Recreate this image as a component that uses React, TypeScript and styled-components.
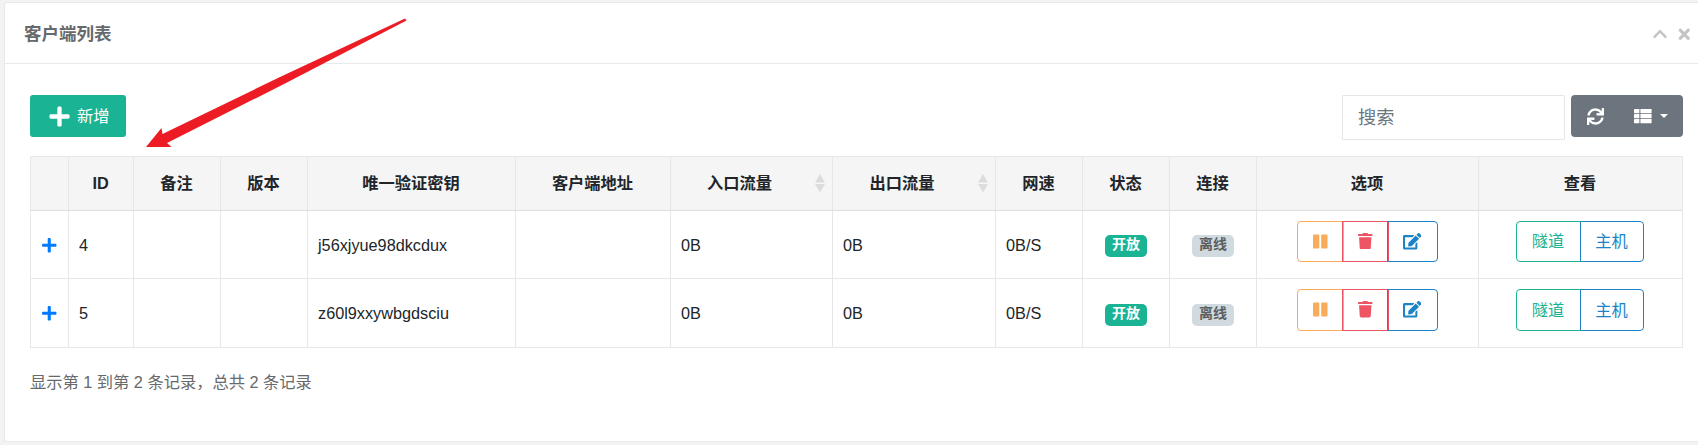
import React from "react";
import styled, { createGlobalStyle } from "styled-components";
import { FaPlus, FaSync, FaTrash, FaEdit, FaChevronUp, FaTimes } from "react-icons/fa";

const Global = createGlobalStyle`
  * { box-sizing: border-box; }
  html, body { margin: 0; background: #f3f3f4; overflow: hidden; }
  body {
    font-family: "Liberation Sans", "Noto Sans CJK SC", sans-serif;
    font-size: 16.25px;
    color: #676a6c;
  }
  button, input { font-family: inherit; }
`;

const Page = styled.div`
  position: relative;
  height: 445px;
  padding: 2px 0 3px 4px;
  overflow: hidden;
`;
const Card = styled.section`
  height: 440px;
  background: #fff;
  border: 1px solid #e7eaec;
  border-right: 0;
  border-radius: 3px 0 0 3px;
`;
const CardHeader = styled.header`
  display: flex;
  align-items: center;
  justify-content: space-between;
  height: 61px;
  padding: 2px 6px 0 19px;
  border-bottom: 1px solid #e7eaec;
`;
const Title = styled.h5`
  margin: 0;
  font-size: 17.5px;
  line-height: 22px;
  font-weight: 700;
`;
const Tools = styled.div`
  display: flex;
  align-items: center;
  gap: 8px;
  color: #c4c4c4;
  svg { display: block; }
`;
const CardBody = styled.div`
  padding: 31px 15px 0 25px;
`;
const Toolbar = styled.div`
  display: flex;
  align-items: flex-start;
  height: 61px;
`;
const AddButton = styled.button`
  display: flex;
  align-items: center;
  gap: 6px;
  width: 96px;
  height: 42px;
  padding: 0 0 0 18px;
  border: 0;
  border-radius: 3px;
  background: #1ab394;
  color: #fff;
  font-size: 16.25px;
  line-height: 24px;
`;
const Search = styled.input`
  width: 223px;
  height: 45px;
  margin: 0 6px 0 auto;
  padding: 2px 15px 0;
  border: 1px solid #e5e6e7;
  border-radius: 1px;
  font-size: 18.2px;
  &::placeholder { color: #6c757d; opacity: 1; }
`;
const ToolGroup = styled.div`
  display: flex;
  width: 112px;
  height: 42px;
  border-radius: 4px;
  background: #6c757d;
  overflow: hidden;
`;
const ToolButton = styled.button<{ $width: number }>`
  display: flex;
  align-items: center;
  justify-content: center;
  gap: 8px;
  width: ${(p) => p.$width}px;
  padding: 0;
  border: 0;
  background: transparent;
  color: #fff;
`;
const Caret = styled.span`
  border: 4px solid transparent;
  border-top-color: #fff;
  border-bottom: 0;
`;
const Table = styled.table`
  table-layout: fixed;
  width: 1653px;
  border-collapse: separate;
  border-spacing: 0;
  border-top: 1px solid #e7e7e7;
  border-right: 1px solid #e7e7e7;
  color: #212529;
  line-height: 24px;
`;
const Th = styled.th<{ $sort?: boolean }>`
  position: relative;
  height: 54px;
  padding: 0 ${(p) => (p.$sort ? 24 : 1)}px 2px 0;
  border-left: 1px solid #e7e7e7;
  border-bottom: 1px solid #ddd;
  background: #f5f5f6;
  text-align: center;
  font-weight: 700;
`;
const SortArrows = styled.svg`
  position: absolute;
  right: 7px;
  top: 17px;
`;
const Td = styled.td<{ $center?: boolean; $last?: boolean }>`
  height: ${(p) => (p.$last ? 69 : 68)}px;
  padding: ${(p) => (p.$center ? "0" : "0 0 0 10px")};
  border-left: 1px solid #e7e7e7;
  border-bottom: 1px solid #e7e7e7;
  text-align: ${(p) => (p.$center ? "center" : "left")};
  vertical-align: middle;
`;
const Expand = styled.span`
  display: flex;
  justify-content: center;
  padding: 1px 1px 0 0;
  color: #007bff;
`;
const Badge = styled.span<{ $bg: string; $fg: string; $last?: boolean }>`
  display: flex;
  align-items: center;
  justify-content: center;
  width: 42px;
  height: 22px;
  margin: ${(p) => (p.$last ? 3 : 2)}px auto 0;
  padding-bottom: 3px;
  border-radius: 5px;
  background: ${(p) => p.$bg};
  color: ${(p) => p.$fg};
  font-size: 14px;
  line-height: 19px;
  font-weight: 700;
`;
const Group = styled.div<{ $last?: boolean; $shift?: number }>`
  display: flex;
  justify-content: center;
  height: ${(p) => (p.$last ? 42 : 41)}px;
  margin-bottom: 6px;
  padding-right: ${(p) => p.$shift ?? 0}px;
`;
const Outline = styled.button<{ $color: string; $width: number; $overlap?: number }>`
  display: flex;
  align-items: center;
  justify-content: center;
  width: ${(p) => p.$width}px;
  margin-left: -${(p) => p.$overlap ?? 0}px;
  padding: 0 1px 1px 0;
  border: 1px solid ${(p) => p.$color};
  background: transparent;
  color: ${(p) => p.$color};
  font-size: 16.25px;
  line-height: 24px;
  &:first-child { border-radius: 4px 0 0 4px; }
  &:last-child { border-radius: 0 4px 4px 0; }
`;
const Summary = styled.p`
  margin: 22px 0 0;
  line-height: 24px;
`;
const Arrow = styled.svg`
  position: absolute;
  left: 140px;
  top: 10px;
  pointer-events: none;
`;

const PauseIcon = () => (
  <svg width="15" height="15" viewBox="0 0 15 15" fill="currentColor">
    <rect x="0" y="0.5" width="6.3" height="14" rx="1" />
    <rect x="8.2" y="0.5" width="6.3" height="14" rx="1" />
  </svg>
);

const ListIcon = () => (
  <svg width="18" height="15" viewBox="0 0 18 15" fill="currentColor">
    {[0, 5, 10].map((y) => (
      <React.Fragment key={y}>
        <rect x="0" y={y} width="5.4" height="4.2" rx="0.4" />
        <rect x="6.4" y={y} width="11.2" height="4.2" rx="0.4" />
      </React.Fragment>
    ))}
  </svg>
);

const columns: { label: string; width: number; sort?: boolean }[] = [
  { label: "", width: 38 },
  { label: "ID", width: 65 },
  { label: "备注", width: 87 },
  { label: "版本", width: 87 },
  { label: "唯一验证密钥", width: 208 },
  { label: "客户端地址", width: 155 },
  { label: "入口流量", width: 162, sort: true },
  { label: "出口流量", width: 163, sort: true },
  { label: "网速", width: 87 },
  { label: "状态", width: 87 },
  { label: "连接", width: 87 },
  { label: "选项", width: 222 },
  { label: "查看", width: 204 },
];

const clients = [
  { id: 4, key: "j56xjyue98dkcdux" },
  { id: 5, key: "z60l9xxywbgdsciu" },
];

export default function App() {
  return (
    <>
      <Global />
      <Page>
        <Card>
          <CardHeader>
            <Title>客户端列表</Title>
            <Tools>
              <FaChevronUp size={16} />
              <FaTimes size={16.5} />
            </Tools>
          </CardHeader>
          <CardBody>
            <Toolbar>
              <AddButton>
                <FaPlus size={23} />
                新增
              </AddButton>
              <Search placeholder="搜索" />
              <ToolGroup>
                <ToolButton $width={48}><FaSync size={17} /></ToolButton>
                <ToolButton $width={64}><ListIcon /><Caret /></ToolButton>
              </ToolGroup>
            </Toolbar>
            <Table>
              <colgroup>
                {columns.map((c, i) => <col key={i} width={c.width} />)}
              </colgroup>
              <thead>
                <tr>
                  {columns.map((c, i) => (
                    <Th key={i} $sort={c.sort}>
                      {c.label}
                      {c.sort && (
                        <SortArrows width="10" height="19" viewBox="0 0 10 19" fill="#dcdcdc">
                          <path d="M5 0l5 8.500H0zM5 18.500l5-8.500H0z" />
                        </SortArrows>
                      )}
                    </Th>
                  ))}
                </tr>
              </thead>
              <tbody>
                {clients.map((c, i) => {
                  const last = i === clients.length - 1;
                  return (
                    <tr key={c.id}>
                      <Td $center $last={last}><Expand><FaPlus size={16.5} /></Expand></Td>
                      <Td>{c.id}</Td>
                      <Td />
                      <Td />
                      <Td>{c.key}</Td>
                      <Td />
                      <Td>0B</Td>
                      <Td>0B</Td>
                      <Td>0B/S</Td>
                      <Td $center><Badge $last={last} $bg="#1ab394" $fg="#fff">开放</Badge></Td>
                      <Td $center><Badge $last={last} $bg="#d1dade" $fg="#5e5e5e">离线</Badge></Td>
                      <Td $center>
                        <Group $last={last}>
                          <Outline $color="#f8ac59" $width={47}><PauseIcon /></Outline>
                          <Outline $color="#ed5565" $width={47} $overlap={2}><FaTrash size={16.5} /></Outline>
                          <Outline $color="#1c84c6" $width={51} $overlap={2}><FaEdit size={18.5} /></Outline>
                        </Group>
                      </Td>
                      <Td $center>
                        <Group $last={last} $shift={1}>
                          <Outline $color="#1ab394" $width={65}>隧道</Outline>
                          <Outline $color="#1c84c6" $width={64} $overlap={1}>主机</Outline>
                        </Group>
                      </Td>
                    </tr>
                  );
                })}
              </tbody>
            </Table>
            <Summary>显示第 1 到第 2 条记录，总共 2 条记录</Summary>
          </CardBody>
        </Card>
        <Arrow width="270" height="140" viewBox="0 0 270 140" fill="#ed1c24">
          <path d="M265 8.500L266.500 10.500L145 73.500L27 133L31.500 137H6L21.500 118L22.500 124L140 67Z" />
        </Arrow>
      </Page>
    </>
  );
}
